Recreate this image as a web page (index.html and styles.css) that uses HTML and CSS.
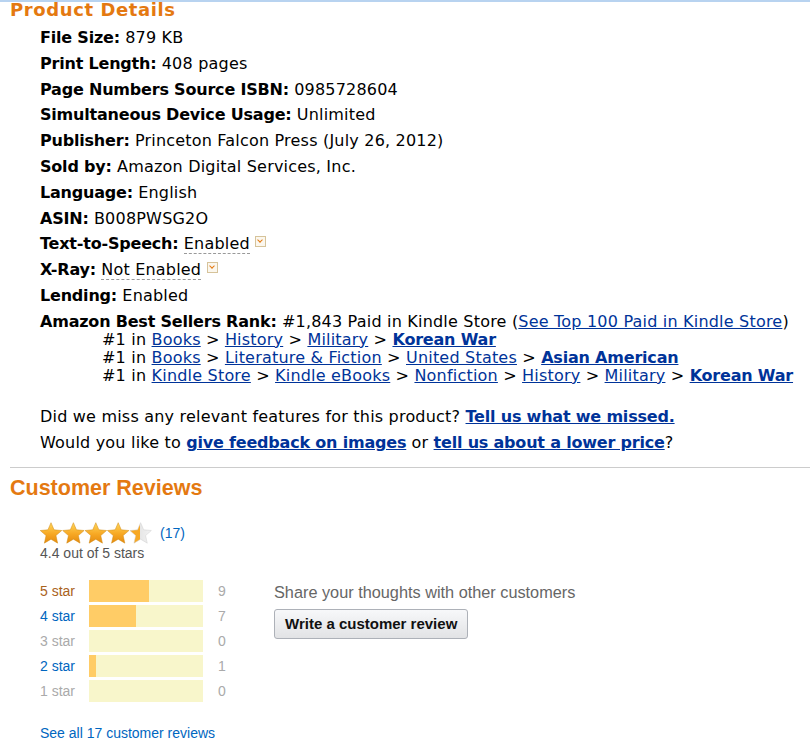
FILE: index.html
```html
<!DOCTYPE html>
<html lang="en">

<head>
  <meta charset="UTF-8">
  <meta name="viewport" content="width=device-width, initial-scale=1.0">
  <title>Product Details</title>
  <link rel="stylesheet" href="styles.css">
</head>

<body>
<div class="top_line"></div>

<h2 class="section_title">Product Details</h2>

<ul class="details">
  <li><b>File Size:</b> 879 KB</li>
  <li><b>Print Length:</b> 408 pages</li>
  <li><b>Page Numbers Source ISBN:</b> 0985728604</li>
  <li><b>Simultaneous Device Usage:</b> Unlimited</li>
  <li><b>Publisher:</b> Princeton Falcon Press (July 26, 2012)</li>
  <li><b>Sold by:</b> Amazon Digital Services, Inc.</li>
  <li><b>Language:</b> English</li>
  <li><b>ASIN:</b> B008PWSG2O</li>
  <li><b>Text-to-Speech:</b> <span class="dotted">Enabled</span> <span class="drop"></span></li>
  <li><b>X-Ray:</b> <span class="dotted">Not Enabled</span> <span class="drop"></span></li>
  <li><b>Lending:</b> Enabled</li>
  <li class="rank">
    <b>Amazon Best Sellers Rank:</b> #1,843 Paid in Kindle Store (<a href="#">See Top 100 Paid in Kindle Store</a>)
    <div class="rank_line">#1 in <a href="#">Books</a> &gt; <a href="#">History</a> &gt; <a href="#">Military</a> &gt; <a href="#"><b>Korean War</b></a></div>
    <div class="rank_line">#1 in <a href="#">Books</a> &gt; <a href="#">Literature &amp; Fiction</a> &gt; <a href="#">United States</a> &gt; <a href="#"><b>Asian American</b></a></div>
    <div class="rank_line">#1 in <a href="#">Kindle Store</a> &gt; <a href="#">Kindle eBooks</a> &gt; <a href="#">Nonfiction</a> &gt; <a href="#">History</a> &gt; <a href="#">Military</a> &gt; <a href="#"><b>Korean War</b></a></div>
  </li>
</ul>

<div class="feedback">
  <div>Did we miss any relevant features for this product? <a href="#"><b>Tell us what we missed.</b></a></div>
  <div>Would you like to <a href="#"><b>give feedback on images</b></a> or <a href="#"><b>tell us about a lower price</b></a>?</div>
</div>

<hr class="divider">

<h2 class="section_title reviews_title">Customer Reviews</h2>

<div class="reviews">
  <div class="summary">
    <div class="stars_row">
      <svg class="stars" width="114" height="22" viewBox="0 0 114 22">
        <defs>
          <linearGradient id="gold" x1="0" y1="0" x2="0" y2="1">
            <stop offset="0" stop-color="#ffd75a"/>
            <stop offset="0.55" stop-color="#f7a824"/>
            <stop offset="1" stop-color="#e58b0f"/>
          </linearGradient>
          <linearGradient id="part" x1="0" y1="0" x2="1" y2="0">
            <stop offset="0" stop-color="#f7a824"/>
            <stop offset="0.45" stop-color="#f7a824"/>
            <stop offset="0.45" stop-color="#e6e6e6"/>
            <stop offset="1" stop-color="#f2f2f2"/>
          </linearGradient>
          <path id="star" d="M11 0.7 L14.06 7.79 L21.75 8.51 L15.95 13.61 L17.64 21.14 L11 17.2 L4.36 21.14 L6.05 13.61 L0.25 8.51 L7.94 7.79 Z"/>
        </defs>
        <use href="#star" fill="url(#gold)" stroke="#d08a14" stroke-width="0.5"/>
        <use href="#star" x="22.4" fill="url(#gold)" stroke="#d08a14" stroke-width="0.5"/>
        <use href="#star" x="44.8" fill="url(#gold)" stroke="#d08a14" stroke-width="0.5"/>
        <use href="#star" x="67.2" fill="url(#gold)" stroke="#d08a14" stroke-width="0.5"/>
        <use href="#star" x="89.6" fill="url(#part)" stroke="#cfcfcf" stroke-width="0.5"/>
      </svg>
      <a href="#" class="count_link">(17)</a>
    </div>
    <div class="out_of">4.4 out of 5 stars</div>

    <table class="histogram">
      <tr>
        <td class="label hot">5 star</td>
        <td><div class="bar"><div class="fill" style="width: 53%"></div></div></td>
        <td class="num">9</td>
      </tr>
      <tr>
        <td class="label"><a href="#">4 star</a></td>
        <td><div class="bar"><div class="fill" style="width: 41%"></div></div></td>
        <td class="num">7</td>
      </tr>
      <tr>
        <td class="label off">3 star</td>
        <td><div class="bar"></div></td>
        <td class="num">0</td>
      </tr>
      <tr>
        <td class="label"><a href="#">2 star</a></td>
        <td><div class="bar"><div class="fill" style="width: 6%"></div></div></td>
        <td class="num">1</td>
      </tr>
      <tr>
        <td class="label off">1 star</td>
        <td><div class="bar"></div></td>
        <td class="num">0</td>
      </tr>
    </table>

    <a href="#" class="see_all">See all 17 customer reviews</a>
  </div>

  <div class="write">
    <div class="share">Share your thoughts with other customers</div>
    <button class="write_button">Write a customer review</button>
  </div>
</div>
</body>

</html>
```

FILE: styles.css
```css
body {
    margin: 0;
    font-family: 'DejaVu Sans', Verdana, sans-serif;
    font-size: 16px;
    letter-spacing: 0.2px;
    color: #000;
    background-color: white;
}

b {
    letter-spacing: -0.2px;
}

a {
    color: #003399;
}

.top_line {
    height: 2px;
    background-color: #b8d3f0;
}

.section_title {
    margin: 0;
    padding-left: 10px;
    font-family: 'DejaVu Sans', Verdana, sans-serif;
    font-size: 18px;
    letter-spacing: 0.6px;
    line-height: 16px;
    font-weight: bold;
    color: #e47911;
}

.details {
    list-style: none;
    margin: 0;
    padding: 7px 0 0 40px;
}

.details li {
    line-height: 25.8px;
}

.dotted {
    border-bottom: 1px dashed #999;
}

.drop {
    display: inline-block;
    width: 11px;
    height: 11px;
    border: 1px solid #d6c39a;
    box-sizing: border-box;
    position: relative;
    top: -3px;
    vertical-align: middle;
    background-color: #fbf7ee;
}

.drop::after {
    content: '';
    position: absolute;
    left: 2px;
    top: 1px;
    width: 3px;
    height: 3px;
    border-right: 1.5px solid #e47911;
    border-bottom: 1.5px solid #e47911;
    transform: rotate(45deg);
}

.details .rank {
    line-height: 18px;
    padding-top: 4px;
}

.rank_line {
    padding-left: 62px;
}

.feedback {
    padding: 19px 0 0 40px;
    line-height: 26px;
}

.divider {
    margin: 11px 0 0 10px;
    border: none;
    border-top: 1px solid #cccccc;
}

.reviews_title {
    margin-top: 12px;
    font-family: 'Liberation Sans', Arial, sans-serif;
    font-size: 21.5px;
    letter-spacing: 0;
}

.reviews {
    display: flex;
    padding: 26px 0 0 40px;
    font-family: 'Liberation Sans', Arial, sans-serif;
    font-size: 14px;
    letter-spacing: 0;
}

.summary {
    width: 234px;
}

.stars_row {
    display: flex;
    align-items: center;
    height: 22px;
}

.count_link {
    margin-left: 6px;
    color: #0066c0;
    text-decoration: none;
}

.out_of {
    color: #555;
    margin-top: 1px;
}

.histogram {
    border-collapse: separate;
    border-spacing: 0 3px;
    margin-top: 16px;
}

.histogram td {
    padding: 0;
    height: 22px;
}

.label {
    width: 49px;
    color: #0066c0;
}

.label a {
    color: #0066c0;
    text-decoration: none;
}

.label.hot {
    color: #a9621c;
}

.label.off {
    color: #aaa;
}

.bar {
    width: 114px;
    height: 22px;
    background-color: #f8f6cb;
}

.fill {
    height: 100%;
    background-color: #ffcc66;
}

.num {
    padding-left: 15px !important;
    color: #aaa;
}

.see_all {
    display: block;
    margin-top: 20px;
    color: #0066c0;
    text-decoration: none;
}

.write {
    margin-top: 61px;
}

.share {
    font-size: 16.3px;
    color: #666;
}

.write_button {
    margin-top: 7px;
    padding: 0 10px;
    height: 30px;
    font-family: 'Liberation Sans', Arial, sans-serif;
    font-size: 15px;
    font-weight: bold;
    color: #111;
    border: 1px solid #adb1b8;
    border-radius: 3px;
    background: linear-gradient(#f7f8fa, #e2e3e5);
}
```
